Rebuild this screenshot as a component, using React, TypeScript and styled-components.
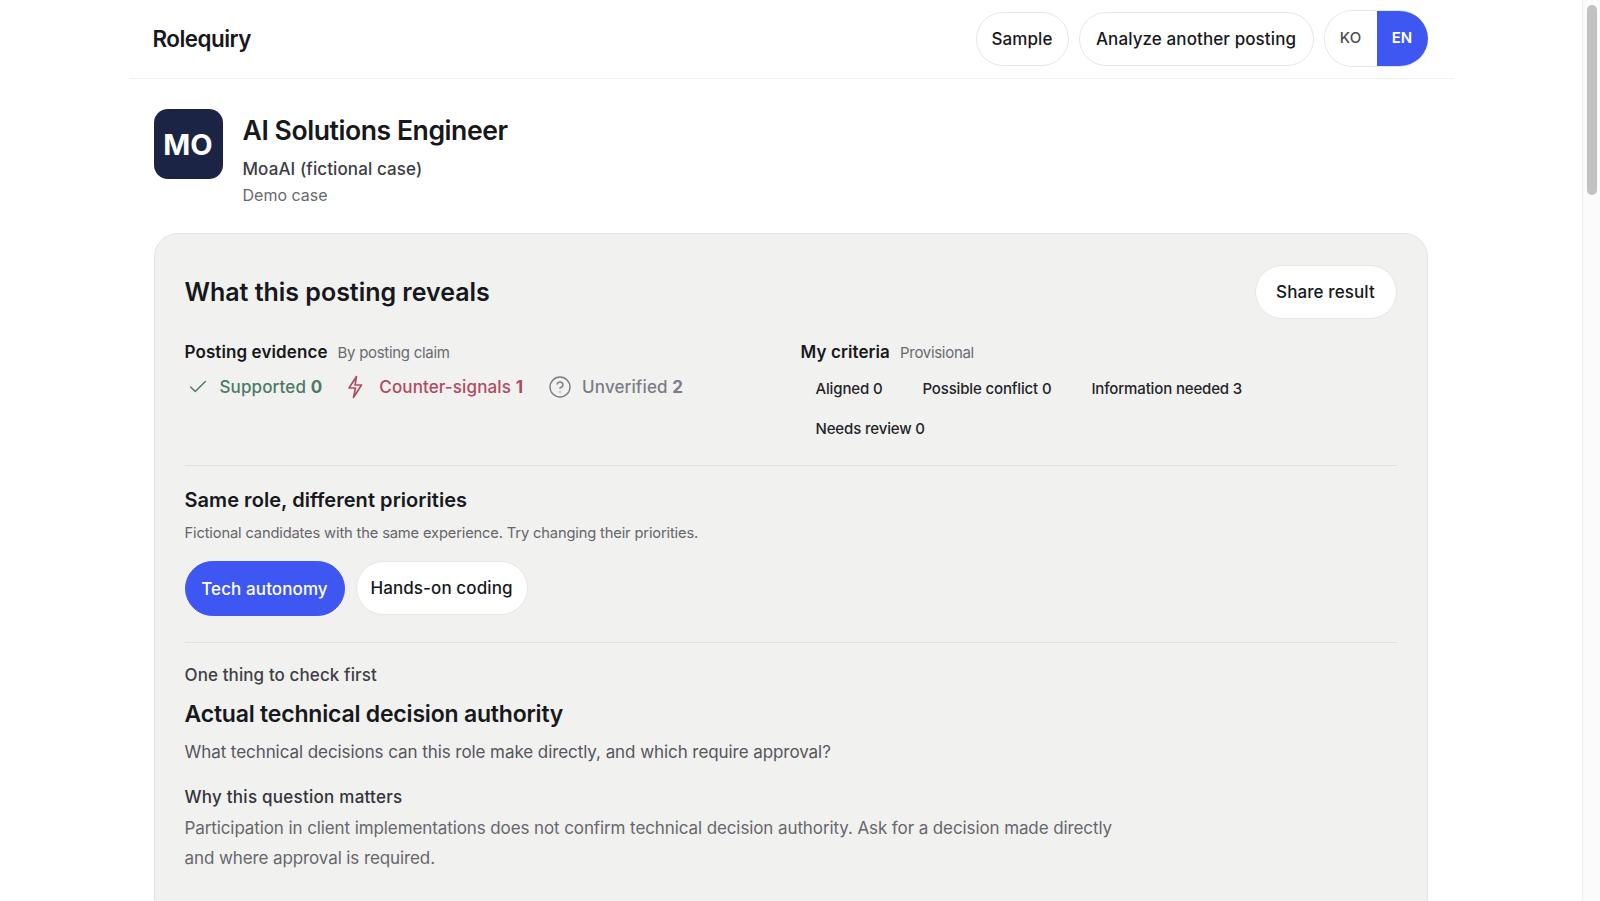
import * as React from "react";
import styled, { createGlobalStyle } from "styled-components";
import { Check, CircleHelp } from "lucide-react";

const GlobalStyle = createGlobalStyle`
  html, body {
    margin: 0;
    height: 100%;
    overflow: hidden;
    background: #ffffff;
  }
  body {
    font-family: "Inter", "Noto Sans", sans-serif;
    color: #17181c;
  }
  * {
    box-sizing: border-box;
  }
`;

const Viewport = styled.div`
  display: flex;
  height: 100vh;
  overflow: hidden;
`;

const Page = styled.div`
  flex: 1;
  min-width: 0;
  overflow: hidden;
`;

const ScrollTrack = styled.div`
  flex: none;
  width: 18px;
  padding: 5px 3px 0 4px;
  background: #fbfbfb;
  border-left: 1px solid #ececec;
`;

const ScrollThumb = styled.div`
  height: 190px;
  border-radius: 6px;
  background: #c2c2c2;
`;

const Container = styled.div`
  width: 1325px;
  margin: 0 auto;
`;

const Header = styled.header`
  display: flex;
  align-items: center;
  justify-content: space-between;
  height: 79px;
  padding: 0 26px 1px 24px;
  border-bottom: 1px solid #efefef;
`;

const Brand = styled.div`
  font-size: 22.4px;
  font-weight: 600;
  letter-spacing: -0.5px;
`;

const HeaderActions = styled.nav`
  display: flex;
  align-items: center;
  gap: 10px;
`;

const PillButton = styled.button<{ $active?: boolean; $width: number }>`
  display: inline-flex;
  align-items: center;
  justify-content: center;
  flex: none;
  width: ${(p) => p.$width}px;
  height: ${(p) => (p.$active ? 55 : 54)}px;
  padding: 0;
  border: 1px solid ${(p) => (p.$active ? "#3f57f2" : "#e6e6e4")};
  border-radius: 28px;
  background: ${(p) => (p.$active ? "#3f57f2" : "#ffffff")};
  color: ${(p) => (p.$active ? "#ffffff" : "#17181c")};
  font-family: inherit;
  font-size: 17px;
  font-weight: 500;
  letter-spacing: 0.1px;
`;

const LangToggle = styled.div`
  display: flex;
  height: 57px;
  overflow: hidden;
  border: 1px solid #e6e6e4;
  border-right: 0;
  border-radius: 29px;
`;

const LangOption = styled.span<{ $active?: boolean }>`
  display: flex;
  align-items: center;
  justify-content: center;
  width: ${(p) => (p.$active ? 51 : 52)}px;
  padding-bottom: 2px;
  background: ${(p) => (p.$active ? "#3f57f2" : "#ffffff")};
  color: ${(p) => (p.$active ? "#ffffff" : "#4a4b50")};
  font-size: 15px;
  font-weight: ${(p) => (p.$active ? 600 : 500)};
`;

const Main = styled.main`
  padding: 30px 26px 0 25px;
`;

const RoleHeader = styled.section`
  display: flex;
  gap: 20px;
  height: 124px;
`;

const Avatar = styled.div`
  display: flex;
  align-items: center;
  justify-content: center;
  flex: none;
  width: 69px;
  height: 70px;
  border-radius: 14px;
  background: #1b2444;
  color: #ffffff;
  font-size: 29px;
  font-weight: 700;
`;

const RoleText = styled.div`
  display: flex;
  flex-direction: column;
`;

const RoleTitle = styled.h1`
  margin: 3px 0 0;
  font-size: 26.6px;
  line-height: 36px;
  font-weight: 600;
  letter-spacing: -0.45px;
`;

const Company = styled.div`
  margin-top: 9px;
  font-size: 17px;
  line-height: 24px;
  font-weight: 500;
  letter-spacing: 0.1px;
  color: #3c3d42;
`;

const RoleNote = styled.div`
  margin-top: 2px;
  font-size: 16px;
  line-height: 24px;
  color: #68696e;
`;

const Card = styled.section`
  min-height: 2500px;
  padding: 31px 30px;
  border: 1px solid #e4e4e1;
  border-radius: 24px;
  background: #f1f1f0;
`;

const CardHeader = styled.div`
  display: flex;
  align-items: center;
  justify-content: space-between;
  height: 54px;
`;

const CardTitle = styled.h2`
  margin: 0;
  font-size: 25px;
  font-weight: 600;
  letter-spacing: -0.02px;
`;

const Summary = styled.div`
  display: grid;
  grid-template-columns: 616px 1fr;
  margin-top: 21px;
  padding-bottom: 21px;
  border-bottom: 1px solid #e1e1df;
`;

const SummaryLabel = styled.div`
  display: flex;
  align-items: baseline;
  gap: 10px;
  height: 24px;
  line-height: 24px;
`;

const SummaryTitle = styled.span`
  font-size: 17px;
  font-weight: 600;
  letter-spacing: 0.1px;
`;

const SummaryHint = styled.span`
  font-size: 15px;
  letter-spacing: -0.3px;
  color: #6a6b70;
`;

const StatusRow = styled.div`
  display: flex;
  align-items: center;
  height: 24px;
  margin-top: 11px;
  padding-left: 2px;
`;

const Status = styled.div<{ $tone: string; $gap: number; $after: number }>`
  display: flex;
  align-items: center;
  gap: ${(p) => p.$gap}px;
  margin-right: ${(p) => p.$after}px;
  font-size: 17px;
  font-weight: 500;
  letter-spacing: 0.12px;
  color: ${(p) => p.$tone};

  b {
    font-weight: 700;
  }
`;

const ChipRow = styled.div`
  display: flex;
  flex-wrap: wrap;
  gap: 10px;
  margin-top: 10px;
`;

const Chip = styled.span`
  height: 30px;
  padding: 0 15px;
  font-size: 15px;
  line-height: 30px;
  font-weight: 500;
  letter-spacing: -0.15px;
  color: #24252a;
`;

const Priorities = styled.div`
  padding: 20px 0 26px;
  border-bottom: 1px solid #e1e1df;
`;

const SectionTitle = styled.h3`
  margin: 0;
  font-size: 20px;
  line-height: 28px;
  font-weight: 600;
  letter-spacing: 0.05px;
`;

const SectionNote = styled.p`
  margin: 7px 0 0;
  font-size: 14.7px;
  line-height: 24px;
  letter-spacing: -0.15px;
  color: #65666b;
`;

const PriorityButtons = styled.div`
  display: flex;
  gap: 11px;
  margin-top: 16px;
`;

const CheckFirst = styled.div`
  padding-top: 19px;
`;

const Eyebrow = styled.div`
  font-size: 17px;
  line-height: 26px;
  font-weight: 500;
  letter-spacing: 0.1px;
  color: #3f4045;
`;

const QuestionTitle = styled.h3`
  margin: 11px 0 0;
  font-size: 23px;
  line-height: 30px;
  font-weight: 600;
  letter-spacing: -0.2px;
`;

const Question = styled.p`
  margin: 8px 0 0;
  font-size: 17px;
  line-height: 30px;
  letter-spacing: -0.07px;
  color: #55565b;
`;

const WhyTitle = styled.div`
  margin-top: 15px;
  font-size: 17px;
  line-height: 30px;
  font-weight: 500;
  letter-spacing: 0.25px;
  color: #33343a;
`;

const WhyText = styled.p`
  width: 945px;
  margin: 1px 0 0;
  font-size: 17px;
  line-height: 30px;
  letter-spacing: -0.1px;
  color: #66676c;
`;

const BoltIcon = () => (
  <svg width="16" height="24" viewBox="0 0 16 24" fill="none" stroke="currentColor" strokeWidth="1.6" strokeLinejoin="round">
    <path d="M9.5 1.5 2 13h6.5l-2 9.5 8-12.5H8z" />
  </svg>
);

export default function App() {
  return (
    <Viewport>
      <GlobalStyle />
      <Page>
        <Container>
          <Header>
            <Brand>Rolequiry</Brand>
            <HeaderActions>
              <PillButton $width={93}>Sample</PillButton>
              <PillButton $width={235}>Analyze another posting</PillButton>
              <LangToggle>
                <LangOption>KO</LangOption>
                <LangOption $active>EN</LangOption>
              </LangToggle>
            </HeaderActions>
          </Header>
          <Main>
            <RoleHeader>
              <Avatar>MO</Avatar>
              <RoleText>
                <RoleTitle>AI Solutions Engineer</RoleTitle>
                <Company>MoaAI (fictional case)</Company>
                <RoleNote>Demo case</RoleNote>
              </RoleText>
            </RoleHeader>
            <Card>
              <CardHeader>
                <CardTitle>What this posting reveals</CardTitle>
                <PillButton $width={142}>Share result</PillButton>
              </CardHeader>
              <Summary>
                <div>
                  <SummaryLabel>
                    <SummaryTitle>Posting evidence</SummaryTitle>
                    <SummaryHint>By posting claim</SummaryHint>
                  </SummaryLabel>
                  <StatusRow>
                    <Status $tone="#4b7a67" $gap={11} $after={25}>
                      <Check size={22} strokeWidth={1.6} />
                      <span>
                        Supported <b>0</b>
                      </span>
                    </Status>
                    <Status $tone="#b04a60" $gap={16} $after={25}>
                      <BoltIcon />
                      <span>
                        Counter-signals <b>1</b>
                      </span>
                    </Status>
                    <Status $tone="#7b7c86" $gap={10} $after={0}>
                      <CircleHelp size={24} strokeWidth={1.4} />
                      <span>
                        Unverified <b>2</b>
                      </span>
                    </Status>
                  </StatusRow>
                </div>
                <div>
                  <SummaryLabel>
                    <SummaryTitle>My criteria</SummaryTitle>
                    <SummaryHint>Provisional</SummaryHint>
                  </SummaryLabel>
                  <ChipRow>
                    <Chip>Aligned 0</Chip>
                    <Chip>Possible conflict 0</Chip>
                    <Chip>Information needed 3</Chip>
                    <Chip>Needs review 0</Chip>
                  </ChipRow>
                </div>
              </Summary>
              <Priorities>
                <SectionTitle>Same role, different priorities</SectionTitle>
                <SectionNote>Fictional candidates with the same experience. Try changing their priorities.</SectionNote>
                <PriorityButtons>
                  <PillButton $active $width={160}>
                    Tech autonomy
                  </PillButton>
                  <PillButton $width={172}>Hands-on coding</PillButton>
                </PriorityButtons>
              </Priorities>
              <CheckFirst>
                <Eyebrow>One thing to check first</Eyebrow>
                <QuestionTitle>Actual technical decision authority</QuestionTitle>
                <Question>What technical decisions can this role make directly, and which require approval?</Question>
                <WhyTitle>Why this question matters</WhyTitle>
                <WhyText>
                  Participation in client implementations does not confirm technical decision authority. Ask for a
                  decision made directly and where approval is required.
                </WhyText>
              </CheckFirst>
            </Card>
          </Main>
        </Container>
      </Page>
      <ScrollTrack>
        <ScrollThumb />
      </ScrollTrack>
    </Viewport>
  );
}
